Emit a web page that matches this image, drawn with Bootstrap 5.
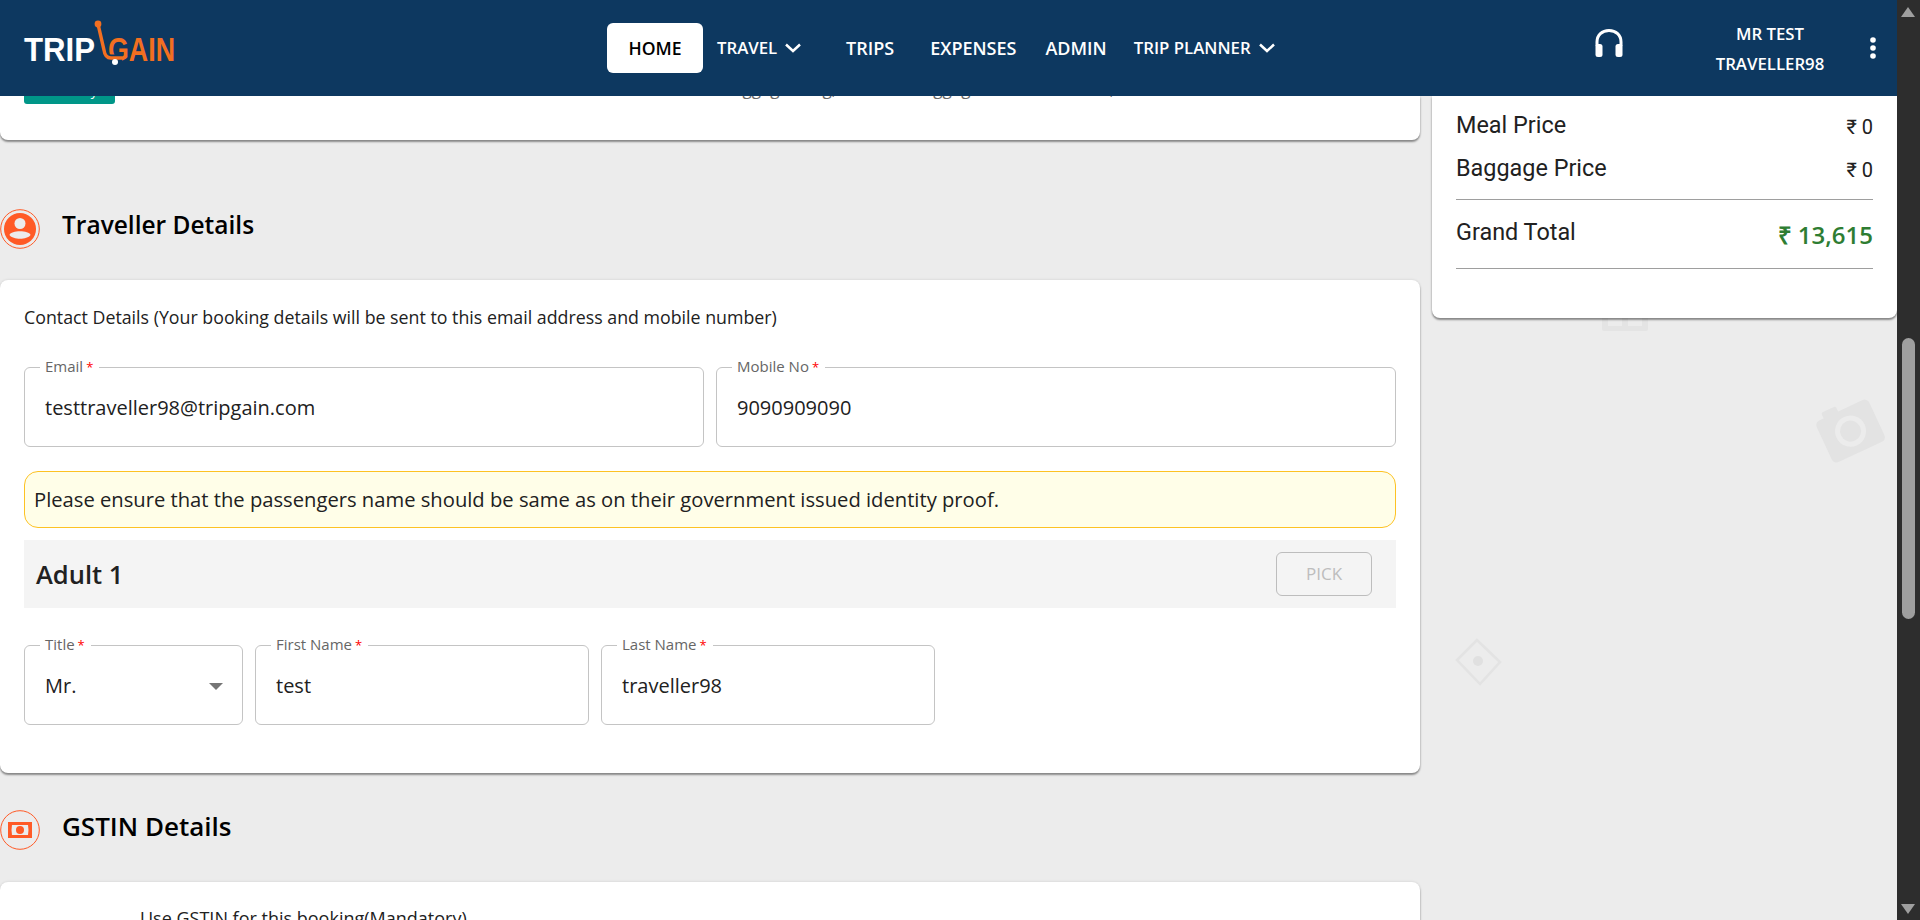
<!DOCTYPE html>
<html lang="en">
<head>
<meta charset="UTF-8">
<meta name="viewport" content="width=device-width, initial-scale=1.0">
<title>TripGain - Traveller Details</title>
<link href="https://cdn.jsdelivr.net/npm/bootstrap@5.3.0/dist/css/bootstrap.min.css" rel="stylesheet">
<style>
html, body { height: 100%; overflow: hidden; }
body { font-family: "Open Sans", "Liberation Sans", sans-serif; background: #ececec; color: #212121; }
.app-wrap { height: 920px; }
.app-col { width: 1897px; }

/* top bar */
.top-bar { height: 96px; background: #0d3860; position: relative; z-index: 5; }
.brand-svg { position: absolute; left: 0; top: 0; }
.nav-main { position: absolute; left: 607px; top: 23px; }
.nav-item-tg { color: #fff; font-weight: 600; font-size: 18px; height: 50px; display: flex; align-items: center; white-space: nowrap; text-decoration: none; }
.nav-item-tg.is-active { background: #fff; color: #000; border-radius: 6px; width: 96px; justify-content: center; font-size: 17.6px; }
.nav-item-tg.is-small { font-size: 16.8px; }
.nav-travel { margin-left: 14px; width: 129px; }
.nav-exp { margin-left: 36px; }
.nav-admin { margin-left: 29px; }
.nav-plan { margin-left: 27px; }
.chev { margin-left: 7px; }
.user-box { position: absolute; left: 1700px; top: 19px; width: 140px; text-align: center; color: #fff; font-weight: 600; font-size: 16.8px; line-height: 30px; }
.head-ico { position: absolute; left: 1594px; top: 28px; }
.kebab-ico { position: absolute; left: 1869px; top: 37px; }

/* scrollbar strip */
.fake-scroll { width: 23px; background: #2d2d2d; }
.scroll-arrow { width: 0; height: 0; margin: 7px 0 0 4px; border-left: 7.5px solid transparent; border-right: 7.5px solid transparent; border-bottom: 10px solid #9f9f9f; }
.scroll-arrow.is-down { margin-top: auto; margin-bottom: 6px; border-bottom: 0; border-top: 10px solid #9f9f9f; }
.scroll-thumb { width: 13px; height: 281px; margin: 321px 0 0 5px; background: #9f9f9f; border-radius: 7px; }

/* scrolled page area */
.page-area { height: 824px; overflow: hidden; position: relative; }
.bg-marks { position: absolute; left: 0; top: 0; }
.left-pane { width: 1420px; position: relative; }
.right-pane { width: 465px; margin-left: 12px; position: relative; }
.panel-tg { background: #fff; border-radius: 0 0 8px 8px; box-shadow: 0 2px 2px rgba(0,0,0,.4), 0 0 3px rgba(0,0,0,.12); }
.panel-full { border-radius: 8px; }
.fare-top { height: 44px; overflow: hidden; padding-left: 24px; }
.fare-row { margin-top: -14px; height: 22px; }
.tag-cabin { width: 91px; height: 22px; background: #009688; color: #fff; border-radius: 3px; font-size: 13px; line-height: 18px; text-align: center; }
.bag-info { margin-left: 607px; font-size: 17px; line-height: 14px; color: #666; white-space: nowrap; }
.sec-head { height: 40px; }
.sec-head-traveller { margin-top: 69px; margin-bottom: 31px; }
.sec-head-gstin { margin-top: 37px; margin-bottom: 32px; }
.sec-title { font-size: 24.5px; font-weight: 600; color: #000; margin: -7px 0 0 22px; }
.sec-head-gstin .sec-title { font-size: 26px; }
.traveller-panel { height: 493px; padding: 24px; }
.contact-note { font-size: 17.8px; line-height: 26px; }
.field-row { display: flex; gap: 12px; margin-top: 37px; }
.tg-field { border: 1px solid #c4c4c4; border-radius: 6px; height: 80px; padding: 2px 20px 0; margin: 0; position: relative; display: flex; align-items: center; }
.tg-field legend { position: absolute; top: -12px; left: 15px; width: auto; float: none; margin: 0; padding: 0 6px 0 5px; background: #fff; font-size: 15px; line-height: 20px; color: #666; }
.tg-field legend b { color: #f00; font-weight: 400; font-size: 13px; margin-left: 3px; }
.tg-input { border: 0; padding: 0; background: transparent; font-size: 20px; color: #212121; width: 100%; outline: 0; font-family: inherit; }
.f-half { width: 680px; }
.f-title { width: 219px; }
.f-name { width: 334px; }
.caret-tg { width: 0; height: 0; border-left: 7px solid transparent; border-right: 7px solid transparent; border-top: 7px solid #757575; flex: none; margin-right: -1px; }
.warn-note { margin-top: 24px; height: 57px; background: #fffee8; border: 1px solid #fdc223; border-radius: 14px; padding: 0 9px; font-size: 20.2px; line-height: 55px; }
.adult-bar { height: 68px; margin-top: 12px; background: #f4f4f4; padding: 0 24px 0 12px; }
.adult-name { font-size: 25.5px; font-weight: 600; }
.pick-btn { width: 96px; height: 44px; border: 1px solid #bdbdbd; border-radius: 6px; background: transparent; color: #bdbdbd; font-size: 17px; font-weight: 500; padding: 0; }
.fields-names { margin-top: 37px; }
.gstin-panel { height: 60px; padding: 24px 0 0 140px; font-size: 18px; line-height: 24px; border-radius: 8px 8px 0 0; }

/* fare summary */
.fare-panel { height: 222px; padding: 14px 24px 0; font-family: Roboto, "Liberation Sans", sans-serif; font-size: 23.4px; color: #212121; }
.fare-line { line-height: 30px; height: 43px; }
.fare-line.is-last { height: 46px; }
.fare-val { font-size: 20px; padding-top: 2px; }
.fare-rule { border-top: 1.5px solid #9e9e9e; }
.fare-total { height: 68px; padding-top: 15px; }
.fare-green { color: #2e7d32; font-family: "Open Sans", sans-serif; font-size: 24px; font-weight: 600; line-height: 36px; padding-top: 2px; }
</style>
</head>
<body>
<div class="app-wrap d-flex">
    <div class="app-col">
        <header class="top-bar">
            <!-- logo -->
            <svg class="brand-svg" width="190" height="96" viewBox="0 0 190 96">
                <text x="24" y="61" font-family="Liberation Sans, sans-serif" font-weight="700" font-size="33" fill="#fff" textLength="71" lengthAdjust="spacingAndGlyphs">TRIP</text>
                <text x="108" y="61" font-family="Liberation Sans, sans-serif" font-weight="700" font-size="33" fill="#f26f21" textLength="67" lengthAdjust="spacingAndGlyphs">GAIN</text>
                <path d="M98 24 L104 50 Q105 58 111 58 L122 58" fill="none" stroke="#0d3860" stroke-width="7"/>
                <path d="M98 24 L104 50 Q105 58 111 58 L122 58" fill="none" stroke="#f26f21" stroke-width="3.4"/>
                <circle cx="98" cy="24" r="3.4" fill="#f26f21"/>
                <circle cx="115" cy="62" r="3" fill="#fff"/>
            </svg>

            <nav class="nav-main d-flex">
                <a class="nav-item-tg is-active" href="#">HOME</a>
                <a class="nav-item-tg is-small nav-travel" href="#">TRAVEL
                    <svg class="chev" width="18" height="10" viewBox="0 0 18 10"><path d="M2 1.5 L9 8 L16 1.5" fill="none" stroke="#fff" stroke-width="2.5"/></svg>
                </a>
                <a class="nav-item-tg" href="#">TRIPS</a>
                <a class="nav-item-tg nav-exp" href="#">EXPENSES</a>
                <a class="nav-item-tg nav-admin" href="#">ADMIN</a>
                <a class="nav-item-tg is-small nav-plan" href="#">TRIP PLANNER
                    <svg class="chev" width="18" height="10" viewBox="0 0 18 10"><path d="M2 1.5 L9 8 L16 1.5" fill="none" stroke="#fff" stroke-width="2.5"/></svg>
                </a>
            </nav>

            <svg class="head-ico" width="30" height="30" viewBox="0 0 30 30">
                <path d="M3 18 V14 C3 7 8 2.5 15 2.5 S27 7 27 14 V18" fill="none" stroke="#fff" stroke-width="3"/>
                <rect x="1.5" y="16" width="7" height="13" rx="2.5" fill="#fff"/>
                <rect x="21.5" y="16" width="7" height="13" rx="2.5" fill="#fff"/>
            </svg>
            <div class="user-box">MR TEST<br>TRAVELLER98</div>
            <svg class="kebab-ico" width="8" height="22" viewBox="0 0 8 22">
                <circle cx="4" cy="3" r="2.8" fill="#fff"/><circle cx="4" cy="11" r="2.8" fill="#fff"/><circle cx="4" cy="19" r="2.8" fill="#fff"/>
            </svg>
        </header>

        <div class="page-area d-flex">
            <!-- faint background marks -->
            <svg class="bg-marks" width="1897" height="824" viewBox="0 96 1897 824">
                <rect x="1602" y="300" width="46" height="31" rx="2" fill="#e4e4e4"/>
                <rect x="1608" y="318" width="14" height="8" fill="#ececec"/><rect x="1628" y="318" width="14" height="8" fill="#ececec"/>
                <g transform="rotate(-25 1851 432)">
                    <rect x="1822" y="408" width="58" height="46" rx="5" fill="#e3e3e3"/>
                    <rect x="1832" y="402" width="16" height="8" rx="2" fill="#e3e3e3"/>
                    <circle cx="1851" cy="431" r="13" fill="#e3e3e3" stroke="#ececec" stroke-width="5"/>
                </g>
                <path d="M1477 640 L1457 660 L1480 684 L1500 662 Z" fill="none" stroke="#e3e3e3" stroke-width="2.5"/>
                <circle cx="1478" cy="661" r="5" fill="#e0e0e0"/>
            </svg>

            <div class="left-pane">
                <div class="panel-tg fare-top">
                    <div class="fare-row d-flex">
                        <div class="tag-cabin">Economy</div>
                        <div class="bag-info">Baggage: 7 Kg, Check-in Baggage: 15 Kilos in total,</div>
                    </div>
                </div>

                <div class="sec-head sec-head-traveller d-flex align-items-center">
                    <svg width="40" height="40" viewBox="0 0 40 40">
                        <circle cx="20" cy="20" r="19.3" fill="none" stroke="#ff5a26" stroke-width="1"/>
                        <circle cx="20" cy="20" r="16" fill="#ff5a26"/>
                        <circle cx="20" cy="14.5" r="5.5" fill="#ececec"/>
                        <path d="M9.5 26 C11 21 29 21 30.5 26 C27 31 13 31 9.5 26 Z" fill="#ececec"/>
                    </svg>
                    <div class="sec-title">Traveller Details</div>
                </div>

                <div class="panel-tg panel-full traveller-panel">
                    <div class="contact-note">Contact Details (Your booking details will be sent to this email address and mobile number)</div>
                    <div class="field-row">
                        <fieldset class="tg-field f-half">
                            <legend>Email<b>*</b></legend>
                            <input class="tg-input" type="text" value="testtraveller98@tripgain.com">
                        </fieldset>
                        <fieldset class="tg-field f-half">
                            <legend>Mobile No<b>*</b></legend>
                            <input class="tg-input" type="text" value="9090909090">
                        </fieldset>
                    </div>
                    <div class="warn-note">Please ensure that the passengers name should be same as on their government issued identity proof.</div>
                    <div class="adult-bar d-flex align-items-center justify-content-between">
                        <div class="adult-name">Adult 1</div>
                        <button class="pick-btn" type="button" disabled>PICK</button>
                    </div>
                    <div class="field-row fields-names">
                        <fieldset class="tg-field f-title">
                            <legend>Title<b>*</b></legend>
                            <input class="tg-input" type="text" value="Mr.">
                            <span class="caret-tg"></span>
                        </fieldset>
                        <fieldset class="tg-field f-name">
                            <legend>First Name<b>*</b></legend>
                            <input class="tg-input" type="text" value="test">
                        </fieldset>
                        <fieldset class="tg-field f-name">
                            <legend>Last Name<b>*</b></legend>
                            <input class="tg-input" type="text" value="traveller98">
                        </fieldset>
                    </div>
                </div>

                <div class="sec-head sec-head-gstin d-flex align-items-center">
                    <svg width="40" height="40" viewBox="0 0 40 40">
                        <circle cx="20" cy="20" r="19.3" fill="none" stroke="#ff5a26" stroke-width="1"/>
                        <rect x="8" y="12" width="24" height="16" fill="#ff5a26"/>
                        <path d="M12 15 H28 Q29 20 28 25 H12 Q11 20 12 15 Z" fill="#ececec"/>
                        <circle cx="20" cy="20" r="4" fill="#ff5a26"/>
                    </svg>
                    <div class="sec-title">GSTIN Details</div>
                </div>

                <div class="panel-tg gstin-panel">Use GSTIN for this booking(Mandatory)</div>
            </div>

            <div class="right-pane">
                <div class="panel-tg fare-panel">
                    <div class="fare-line d-flex justify-content-between"><span>Meal Price</span><span class="fare-val">₹ 0</span></div>
                    <div class="fare-line is-last d-flex justify-content-between"><span>Baggage Price</span><span class="fare-val">₹ 0</span></div>
                    <div class="fare-rule"></div>
                    <div class="fare-total d-flex justify-content-between"><span>Grand Total</span><span class="fare-green">₹ 13,615</span></div>
                    <div class="fare-rule"></div>
                </div>
            </div>
        </div>
    </div>

    <div class="fake-scroll d-flex flex-column">
        <div class="scroll-arrow"></div>
        <div class="scroll-thumb"></div>
        <div class="scroll-arrow is-down"></div>
    </div>
</div>
<script src="https://cdn.jsdelivr.net/npm/bootstrap@5.3.0/dist/js/bootstrap.bundle.min.js"></script>
</body>
</html>
